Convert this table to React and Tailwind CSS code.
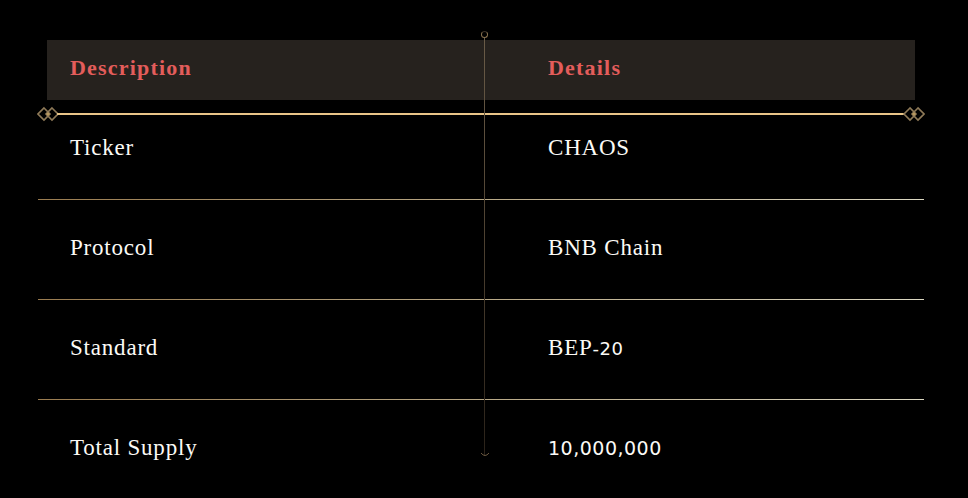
import React from 'react';

const rows = [
  { label: 'Ticker', value: <span>CHAOS</span> },
  { label: 'Protocol', value: <span>BNB Chain</span> },
  {
    label: 'Standard',
    value: (
      <span>
        BEP<span className="font-['DejaVu_Sans',sans-serif] text-[18px] tracking-[0.5px]">-20</span>
      </span>
    ),
  },
  {
    label: 'Total Supply',
    value: <span className="font-['DejaVu_Sans',sans-serif] text-[19px] tracking-[0.5px]">10,000,000</span>,
  },
];

const Ornament = ({ flip }) => (
  <svg width="24" height="16" viewBox="0 0 24 16" className={flip ? 'scale-x-[-1]' : ''}>
    <path d="M7 2 L13 8 L7 14 L1 8 Z" fill="none" stroke="#8f7a58" strokeWidth="1.6" />
    <path d="M15 2 L21 8 L15 14 L9 8 Z" fill="none" stroke="#8f7a58" strokeWidth="1.6" />
    <circle cx="11" cy="8" r="1.6" fill="#b8985f" />
  </svg>
);

const App = () => {
  return (
    <div className="relative w-full h-[498px] bg-black overflow-hidden font-['Liberation_Serif',serif]">
      <div className="ml-[38px] mr-[44px] pt-[40px]">
        <div className="mx-[9px] h-[60px] pb-[6px] bg-[#26221e] grid grid-cols-[501px_1fr] items-center text-[22px] font-semibold tracking-[1.2px] text-[#e35d5b]">
          <div className="pl-[23px]">Description</div>
          <div>Details</div>
        </div>

        <div>
          {rows.map((row, i) => (
            <div key={row.label}>
              <div className="h-[99px] pb-[3px] grid grid-cols-[510px_1fr] items-center text-[23px] tracking-[0.8px] text-[#fbfaf6]">
                <div className="pl-[32px]">{row.label}</div>
                <div>{row.value}</div>
              </div>
              {i < rows.length - 1 && (
                <div className="h-px bg-linear-to-r from-[#9a7c50] via-[#b8a886] to-[#dcd8c2]" />
              )}
            </div>
          ))}
        </div>
      </div>

      {/* gold rule under header */}
      <div className="absolute left-[37px] right-[43px] top-[106px] flex items-center">
        <Ornament />
        <div className="flex-1 h-[2px] bg-[#e8c488] -mx-[4px]" />
        <Ornament flip />
      </div>

      {/* centre vertical rule */}
      <div className="absolute left-[483px] top-[32px] h-[426px] w-[3px] flex flex-col items-center">
        <div className="w-[7px] h-[7px] rounded-full border border-[#8a7350] border-t-[#3a3026] -mt-[1px]" />
        <div className="flex-1 w-px bg-linear-to-b from-[#6a5c48] via-[#4c4030] to-[#2a2219]" />
        <svg width="10" height="6" viewBox="0 0 10 6" className="-mt-[4px]">
          <path d="M1 1 Q5 6 9 1" fill="none" stroke="#6a5840" strokeWidth="1" />
        </svg>
      </div>
    </div>
  );
};

export default App;
